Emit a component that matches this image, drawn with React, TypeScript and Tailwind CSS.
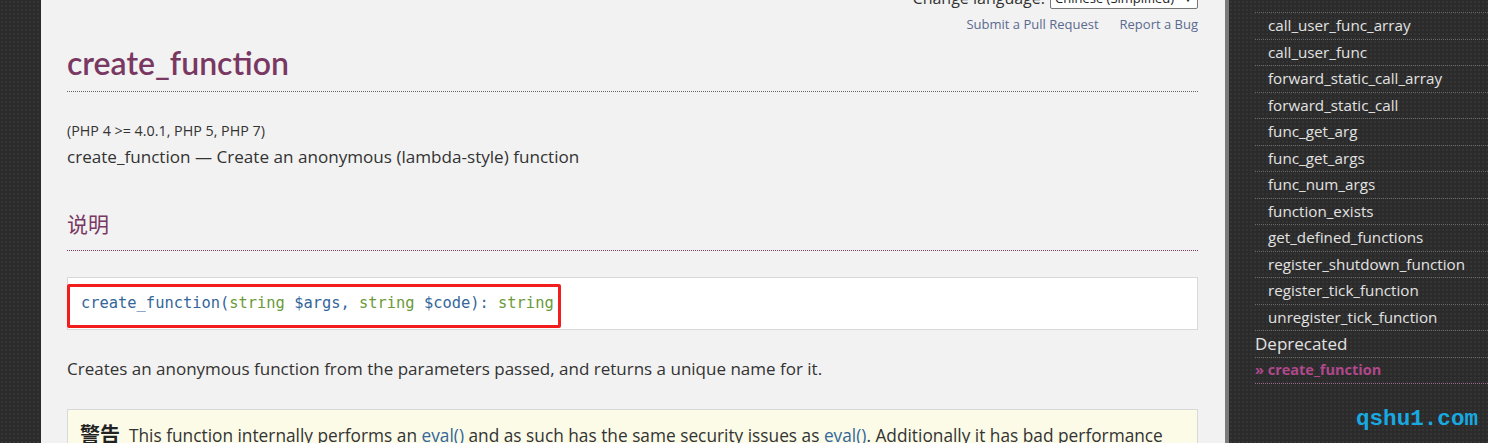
import React from "react";

const sans = "font-['Open_Sans','Noto_Sans_CJK_SC',sans-serif]";
const titleFont = "font-['Lato','Noto_Sans_CJK_SC',sans-serif]";
const mono = "font-['DejaVu_Sans_Mono',monospace]";

const sideItems = [
  "call_user_func_array",
  "call_user_func",
  "forward_static_call_array",
  "forward_static_call",
  "func_get_arg",
  "func_get_args",
  "func_num_args",
  "function_exists",
  "get_defined_functions",
  "register_shutdown_function",
  "register_tick_function",
  "unregister_tick_function",
];

const dark =
  "bg-[#2b2b2b] bg-[radial-gradient(circle,#353535_1px,transparent_1px)] bg-size-[4px_4px]";

const App = () => {
  return (
    <div className={`flex h-[443px] w-[1488px] overflow-hidden ${sans}`}>
      <div className={`w-[41px] shrink-0 ${dark}`} />

      <main className="w-[1184px] shrink-0 bg-[#f2f2f2] pl-[26px] pr-[27px]">
        <div className="-mt-[12px] flex items-end justify-end gap-[5px]">
          <span className="text-[16px] leading-[21px] text-[#333]">Change language:</span>
          <div className="flex h-[21px] w-[148px] items-center justify-between rounded-[2px] border border-[#767676] bg-white px-[4px] text-[13px] text-[#222]">
            <span>Chinese (Simplified)</span>
            <span className="text-[10px]">▼</span>
          </div>
        </div>

        <div className="mt-[6px] flex justify-end gap-[21px] text-[13px] leading-[18px] text-[#5b6a8f]">
          <span>Submit a Pull Request</span>
          <span>Report a Bug</span>
        </div>

        <h1
          className={`mt-[10px] border-b border-dotted border-[#666] pb-[8px] text-[32px] font-semibold leading-[40px] text-[#793862] ${titleFont}`}
        >
          create_function
        </h1>

        <p className="mt-[30px] text-[14.3px] leading-[18px] text-[#333]">(PHP 4 &gt;= 4.0.1, PHP 5, PHP 7)</p>
        <p className="mt-[6px] text-[17.1px] leading-[22px] text-[#333]">
          create_function — Create an anonymous (lambda-style) function
        </p>

        <h2 className="mt-[42px] border-b border-dotted border-[#793862] pb-[12px] text-[21px] leading-[28px] text-[#793862]">
          说明
        </h2>

        <div className="relative mt-[26px] flex h-[53px] items-center border border-[#d9d9d9] bg-white pl-[13px]">
          <code className={`${mono} text-[15.4px] text-[#336699]`}>
            create_function(<span className="text-[#6a9a3a]">string</span> $args,{" "}
            <span className="text-[#6a9a3a]">string</span> $code):{" "}
            <span className="text-[#6a9a3a]">string</span>
          </code>
          <div className="absolute -left-px top-[6px] h-[44px] w-[494px] rounded-[2px] border-[3px] border-[#f21d1d]" />
        </div>

        <p className="mt-[27px] text-[17px] leading-[24px] text-[#333]">
          Creates an anonymous function from the parameters passed, and returns a unique name for it.
        </p>

        <div className="mt-[28px] border border-[#d9d9d9] bg-[#fbfbe8] pl-[12px] pr-[14px] pt-[13px]">
          <p className="text-[17.3px] leading-[24px] text-[#333]">
            <strong className="mr-[9px] text-[20px] font-bold text-[#222]">警告</strong>
            This function internally performs an <span className="text-[#336699]">eval()</span> and as such has the same
            security issues as <span className="text-[#336699]">eval()</span>. Additionally it has bad performance and
            memory usage characteristics.
          </p>
        </div>
      </main>

      <div className="w-[4px] shrink-0 bg-[#7a7a7a]" />

      <aside className={`relative flex-1 pl-[26px] pt-[12px] ${dark}`}>
        <ul className="border-t border-dotted border-[#6a6a6a]">
          {sideItems.map((item) => (
            <li
              key={item}
              className="flex h-[26.5px] items-center border-b border-dotted border-[#6a6a6a] pl-[13px] text-[15.2px] text-[#e2e2e2]"
            >
              {item}
            </li>
          ))}
          <li className="flex h-[26.5px] items-center border-b border-dotted border-[#6a6a6a] text-[17px] text-[#e2e2e2]">
            Deprecated
          </li>
          <li className="flex h-[26.5px] items-center border-b border-dotted border-[#9a6a8a] text-[14.5px] font-bold text-[#b0488c]">
            » create_function
          </li>
        </ul>
        <span className="absolute bottom-[6px] right-[10px] font-['Liberation_Mono',monospace] text-[22.6px] font-bold text-[#19a9e1]">
          qshu1.com
        </span>
      </aside>
    </div>
  );
};

export default App;
